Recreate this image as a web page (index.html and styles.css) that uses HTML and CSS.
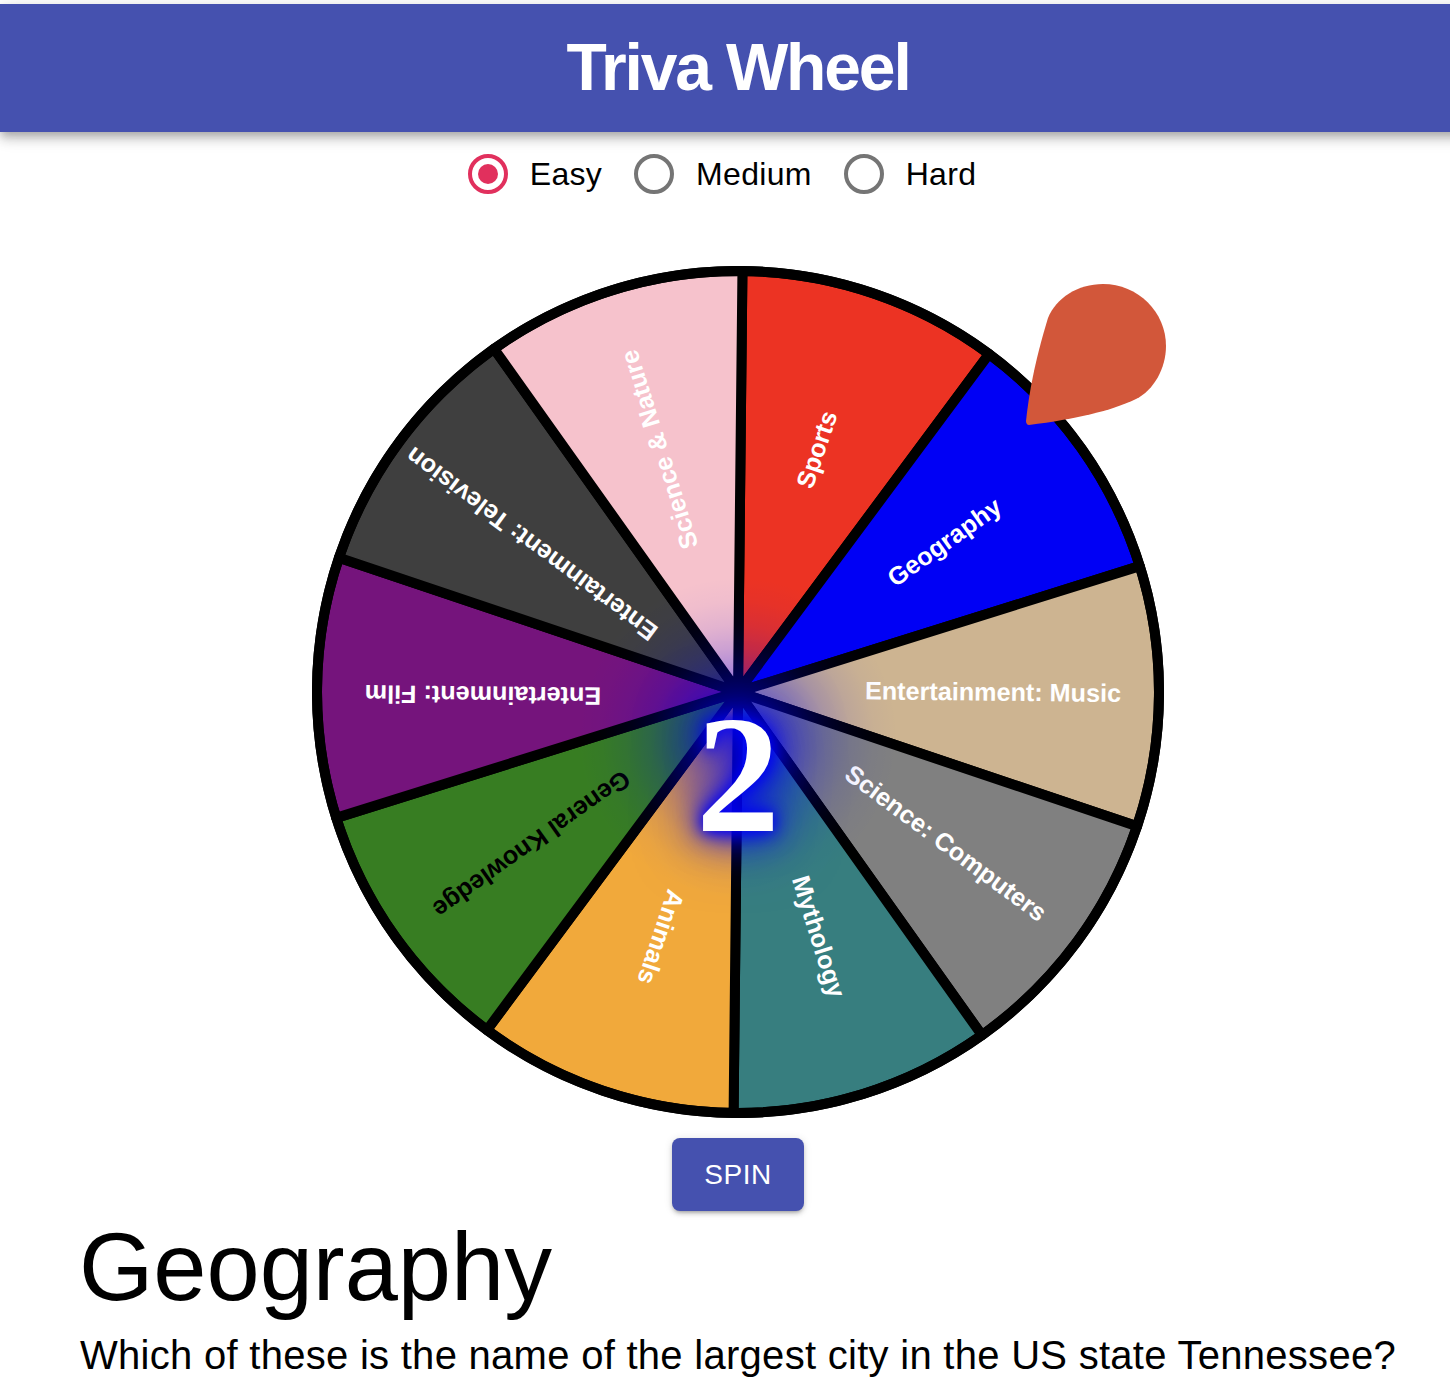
FILE: index.html
```html
<!DOCTYPE html>
<html lang="en">
<head>
    <meta charset="UTF-8">
    <meta name="viewport" content="width=device-width, initial-scale=1.0">
    <title>Triva Wheel</title>
    <link rel="stylesheet" href="styles.css">
</head>
<body>
    <div class="page">
        <header class="app-bar">
            <h1>Triva Wheel</h1>
        </header>

        <form class="levels">
            <label class="level">
                <input type="radio" name="level" checked>
                <span class="dot"></span>
                <span>Easy</span>
            </label>
            <label class="level">
                <input type="radio" name="level">
                <span class="dot"></span>
                <span>Medium</span>
            </label>
            <label class="level">
                <input type="radio" name="level">
                <span class="dot"></span>
                <span>Hard</span>
            </label>
        </form>

        <div class="wheel">
            <svg class="wheel-svg" viewBox="-426 -426 852 852" width="852" height="852">
                <defs>
                    <radialGradient id="hub-glow">
                        <stop offset="0" stop-color="#0000f5" stop-opacity="0.55"/>
                        <stop offset="0.2" stop-color="#0000f5" stop-opacity="0.45"/>
                        <stop offset="0.4" stop-color="#0000f5" stop-opacity="0.3"/>
                        <stop offset="0.55" stop-color="#0000f5" stop-opacity="0.17"/>
                        <stop offset="0.7" stop-color="#0000f5" stop-opacity="0.08"/>
                        <stop offset="0.85" stop-color="#0000f5" stop-opacity="0.025"/>
                        <stop offset="1" stop-color="#0000f5" stop-opacity="0"/>
                    </radialGradient>
                </defs>
                <g transform="rotate(0.6)">
                    <path class="slice" fill="#ec3323" d="M0 0V-421A421 421 0 0 1 247.5 -340.6Z"/>
                    <text class="label" transform="rotate(-72) translate(255 6)">Sports</text>
                </g>
                <g transform="rotate(36.6)">
                    <path class="slice" fill="#0000f5" d="M0 0V-421A421 421 0 0 1 247.5 -340.6Z"/>
                    <text class="label" transform="rotate(-72) translate(255 6)">Geography</text>
                </g>
                <g transform="rotate(72.6)">
                    <path class="slice" fill="#cdb491" d="M0 0V-421A421 421 0 0 1 247.5 -340.6Z"/>
                    <text class="label" transform="rotate(-72) translate(255 6)">Entertainment: Music</text>
                </g>
                <g transform="rotate(108.6)">
                    <path class="slice" fill="#808080" d="M0 0V-421A421 421 0 0 1 247.5 -340.6Z"/>
                    <text class="label" transform="rotate(-72) translate(257 6)">Science: Computers</text>
                </g>
                <g transform="rotate(144.6)">
                    <path class="slice" fill="#377e7f" d="M0 0V-421A421 421 0 0 1 247.5 -340.6Z"/>
                    <text class="label" transform="rotate(-72) translate(257.5 4.7)">Mythology</text>
                </g>
                <g transform="rotate(180.6)">
                    <path class="slice" fill="#f1a93b" d="M0 0V-421A421 421 0 0 1 247.5 -340.6Z"/>
                    <text class="label" transform="rotate(-72) translate(257 3.5)">Animals</text>
                </g>
                <g transform="rotate(216.6)">
                    <path class="slice" fill="#377d22" d="M0 0V-421A421 421 0 0 1 247.5 -340.6Z"/>
                    <text class="label label-dark" transform="rotate(-72) translate(256.5 4)">General Knowledge</text>
                </g>
                <g transform="rotate(252.6)">
                    <path class="slice" fill="#75147c" d="M0 0V-421A421 421 0 0 1 247.5 -340.6Z"/>
                    <text class="label" transform="rotate(-72) translate(255 3)">Entertainment: Film</text>
                </g>
                <g transform="rotate(288.6)">
                    <path class="slice" fill="#3f3f3f" d="M0 0V-421A421 421 0 0 1 247.5 -340.6Z"/>
                    <text class="label" transform="rotate(-72) translate(254 4.4)">Entertainment: Television</text>
                </g>
                <g transform="rotate(324.6)">
                    <path class="slice" fill="#f6c2cc" d="M0 0V-421A421 421 0 0 1 247.5 -340.6Z"/>
                    <text class="label" transform="rotate(-72) translate(255 6)">Science &amp; Nature</text>
                </g>
                <circle class="rim" r="421"/>
                <circle fill="url(#hub-glow)" cx="0" cy="45" r="160"/>
            </svg>
            <svg class="pointer" viewBox="0 0 142 142" width="142" height="142">
                <path fill="#d2573a" d="M3 141C1 141 0 139 0 137C3 110 8 80 22 34C30 14 52 0 77 0C112 0 140 28 140 62C140 84 128 106 110 115C85 127 50 135 3 141Z"/>
            </svg>
            <span class="countdown">2</span>
        </div>

        <div class="actions">
            <button class="spin" type="button">SPIN</button>
        </div>

        <section class="question">
            <h2>Geography</h2>
            <p>Which of these is the name of the largest city in the US state Tennessee?</p>
        </section>
    </div>
</body>
</html>
```

FILE: styles.css
```css
html, body {
    margin: 0;
    height: 100%;
    overflow: hidden;
    background-color: white;
}

body {
    font-family: "Liberation Sans", Arial, sans-serif;
    color: black;
}

.page {
    width: 1476px;
    padding-top: 4px;
}

.app-bar {
    height: 128px;
    display: flex;
    align-items: center;
    justify-content: center;
    background-color: #4551af;
    box-shadow: 0 4px 8px -2px rgba(0, 0, 0, 0.2), 0 8px 10px rgba(0, 0, 0, 0.14), 0 2px 20px rgba(0, 0, 0, 0.12);
}

.app-bar h1 {
    margin: 0 0 2px;
    color: white;
    font-size: 66px;
    font-weight: bold;
    letter-spacing: -2.15px;
}

.levels {
    display: flex;
    justify-content: center;
    height: 84px;
    align-items: center;
}

.level {
    display: flex;
    align-items: center;
    gap: 22px;
    margin-right: 32px;
    font-size: 32px;
    letter-spacing: 0.3px;
}

.level input {
    display: none;
}

.dot {
    box-sizing: border-box;
    width: 40px;
    height: 40px;
    border: 4px solid #757575;
    border-radius: 50%;
    background-clip: content-box;
    padding: 6px;
}

.level input:checked + .dot {
    border-color: #e1305d;
    background-color: #e1305d;
}

.wheel {
    position: relative;
    width: 852px;
    height: 852px;
    margin: 50px auto 0;
}

.wheel-svg {
    display: block;
}

.slice {
    stroke: black;
    stroke-width: 10;
    stroke-linejoin: round;
}

.rim {
    fill: none;
    stroke: black;
    stroke-width: 10;
}

.label {
    fill: white;
    font-size: 25.2px;
    font-weight: bold;
    text-anchor: middle;
}

.label-dark {
    fill: black;
}

.pointer {
    position: absolute;
    left: 714px;
    top: 18px;
}

.countdown {
    position: absolute;
    left: 0;
    right: 0;
    top: 424px;
    text-align: center;
    color: white;
    font-family: "Liberation Serif", "Times New Roman", serif;
    font-size: 168px;
    font-weight: bold;
    line-height: 1;
    text-shadow: 0 0 14px #0000f5, 0 0 24px #0000f5, 0 0 40px #0000f5, 0 0 70px rgba(0, 0, 245, 0.7);
}

.actions {
    display: flex;
    justify-content: center;
    margin-top: 20px;
}

.spin {
    width: 132px;
    height: 73px;
    padding: 0;
    border: none;
    border-radius: 8px;
    background-color: #4551af;
    color: white;
    font-family: inherit;
    font-size: 28px;
    letter-spacing: 0.5px;
    box-shadow: 0 3px 3px -2px rgba(0, 0, 0, 0.2), 0 3px 4px rgba(0, 0, 0, 0.14), 0 1px 8px rgba(0, 0, 0, 0.12);
}

.question {
    padding-left: 79px;
}

.question h2 {
    margin: 0;
    font-size: 95.6px;
    font-weight: normal;
    line-height: 112px;
}

.question p {
    margin: 2px 0 0 1px;
    font-size: 40px;
    line-height: 60px;
    letter-spacing: 0.28px;
}
```
